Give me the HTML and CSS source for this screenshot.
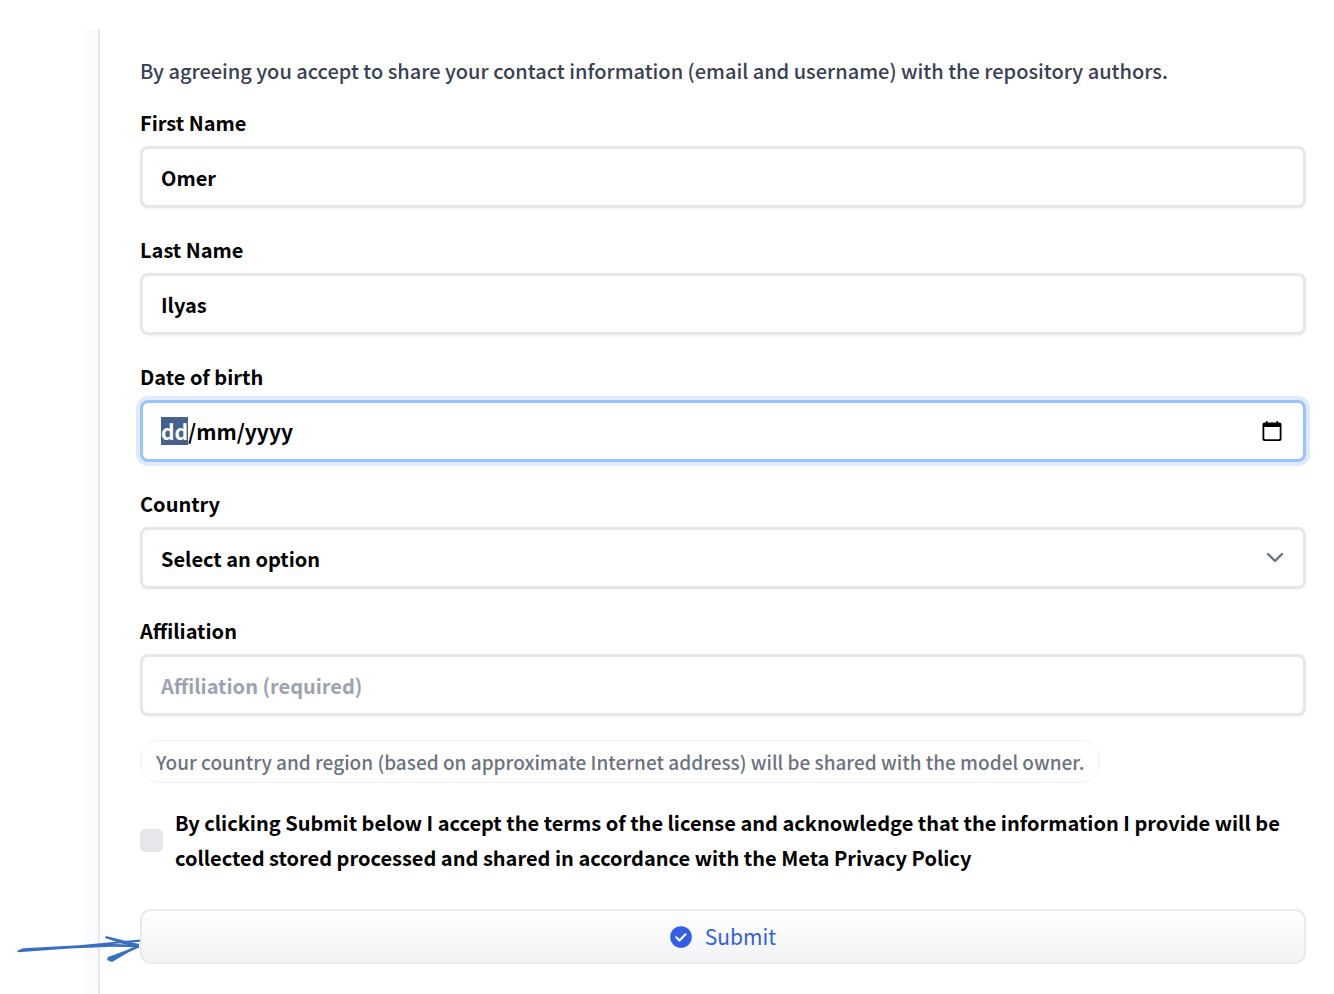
FILE: index.html
```html
<!DOCTYPE html>
<html lang="en">
<head>
<meta charset="utf-8">
<title>Access request</title>
<link rel="stylesheet" href="styles.css">
</head>
<body>
<main class="page">
  <form class="card">
    <p class="intro">By agreeing you accept to share your contact information (email and username) with the repository authors.</p>
    <div class="field">
      <label for="first">First Name</label>
      <input class="control" id="first" type="text" value="Omer">
    </div>
    <div class="field">
      <label for="last">Last Name</label>
      <input class="control" id="last" type="text" value="Ilyas">
    </div>
    <div class="field">
      <label for="dob">Date of birth</label>
      <div class="control date">
        <input class="date-text" id="dob" type="text" value="dd/mm/yyyy">
        <button class="date-button" type="button" aria-label="Open calendar">
          <svg width="20" height="22" viewBox="0 0 20 22"><path d="M4 1h1.500v1.500h9V1H16v1.500h1.500q2 0 2 2v14.500q0 2-2 2H2.500q-2 0-2-2V4.500q0-2 2-2H4zM2.300 7v11.200q0 1 1 1h13.400q1 0 1-1V7z" fill="#000" fill-rule="evenodd"/></svg>
        </button>
      </div>
    </div>
    <div class="field">
      <label for="country">Country</label>
      <div class="select-wrap">
        <select class="control" id="country"><option>Select an option</option></select>
        <svg class="chevron" width="18" height="12" viewBox="0 0 18 12"><path d="M2 2l7 7 7-7" fill="none" stroke="#6b7280" stroke-width="2.400" stroke-linecap="round" stroke-linejoin="round"/></svg>
      </div>
    </div>
    <div class="field">
      <label for="affiliation">Affiliation</label>
      <input class="control" id="affiliation" type="text" placeholder="Affiliation (required)">
    </div>
    <p class="notice">Your country and region (based on approximate Internet address) will be shared with the model owner.</p>
    <div class="consent">
      <input class="check" id="consent" type="checkbox">
      <label for="consent">By clicking Submit below I accept the terms of the license and acknowledge that the information I provide will be collected stored processed and shared in accordance with the Meta Privacy Policy</label>
    </div>
    <div class="submit-row">
      <button class="submit" type="submit">
        <svg width="22" height="22" viewBox="0 0 22 22"><circle cx="11" cy="11" r="10.800" fill="#315fe6"/><path d="M6.200 11.300l3.300 3.200 6-6.200" fill="none" stroke="#fff" stroke-width="2.200" stroke-linecap="round" stroke-linejoin="round"/></svg>
        <span>Submit</span>
      </button>
      <svg class="arrow" width="126" height="30" viewBox="0 0 126 30" fill="#3670c0"><path d="M1 15l6-2.800 56-3 61-5.700v2.200L96 8l27 .8v2.400L96 10.800l-42 1.700-52 3.700z"/><path d="M90 0l12 3 21 5v4L104 7 89 2z"/><path d="M123 8.500v3l-10 4.500-17 10-5-2 1-3 19-7z"/></svg>
    </div>
  </form>
</main>
<script src="script.js"></script>
</body>
</html>
```
FILE: styles.css
```css
* {
  box-sizing: border-box;
}

body {
  margin: 0;
  background: #fff;
  color: #000;
  font: 500 20px/35px "Noto Sans CJK JP", "Noto Sans", sans-serif;
}

input,
select,
button {
  font: inherit;
  color: inherit;
}

.page {
  min-height: 100vh;
  padding-top: 30px;
  padding-left: 85px;
  display: flex;
  overflow-x: hidden;
}

.card {
  flex: 1;
  padding: 23px 28px 29px 40px;
  border-left: 2px solid #e8e9ee;
  position: relative;
  box-shadow: -13px 0 0 #fafbff;
  margin-left: 13px;
}

.intro {
  margin: 0 0 17px;
  color: #374151;
}

.field {
  display: flex;
  flex-direction: column;
  gap: 6px;
  margin-bottom: 24px;
}

.field label,
.consent label {
  font-weight: 700;
}

.control {
  width: 100%;
  height: 62px;
  padding: 0 18px;
  border: 3px solid #e5e7eb;
  border-radius: 8px;
  background: #fff;
  box-shadow: 0 1px 3px rgb(0 0 0 / 6%);
  font-weight: 700;
  outline: none;
}

.control::placeholder {
  color: #9ca3af;
  opacity: 1;
}

.date {
  display: flex;
  align-items: center;
  padding-right: 21px;
  border-color: #99c3fb;
  box-shadow: 0 0 0 4px #e0eafe;
}

.date-text {
  flex: 1;
  min-width: 0;
  padding: 0;
  border: 0;
  outline: none;
  background: none;
  font-size: 21px;
  line-height: 28px;
}

.date-text::selection {
  background: #44628d;
  color: #fff;
}

.date-button {
  display: flex;
  padding: 0;
  border: 0;
  background: none;
}

.select-wrap {
  position: relative;
}

.select-wrap select {
  display: block;
  appearance: none;
}

.chevron {
  position: absolute;
  right: 22px;
  top: 25px;
  pointer-events: none;
}

.notice {
  width: fit-content;
  margin: 0 0 22px;
  padding: 3px 15px;
  border: 1px solid #f1f2f4;
  border-radius: 20px;
  color: #6b7280;
  font-size: 19px;
}

.consent {
  display: flex;
  align-items: center;
  gap: 12px;
  margin-bottom: 34px;
}

.check {
  appearance: none;
  flex: none;
  width: 23px;
  height: 23px;
  margin: 0;
  border-radius: 5px;
  background: #e5e7eb;
}

.submit-row {
  position: relative;
}

.submit {
  display: flex;
  align-items: center;
  justify-content: center;
  gap: 13px;
  width: 100%;
  height: 55px;
  border: 2px solid #e8eaed;
  border-radius: 11px;
  background: linear-gradient(#fff, #f2f3f5);
  color: #315fe6;
  font-size: 21px;
  font-weight: 400;
}

.arrow {
  position: absolute;
  right: calc(100% - 2px);
  top: 27px;
}
```
FILE: script.js
```js
const dob = document.getElementById("dob");
dob.focus({ preventScroll: true });
dob.setSelectionRange(0, 2);
```
